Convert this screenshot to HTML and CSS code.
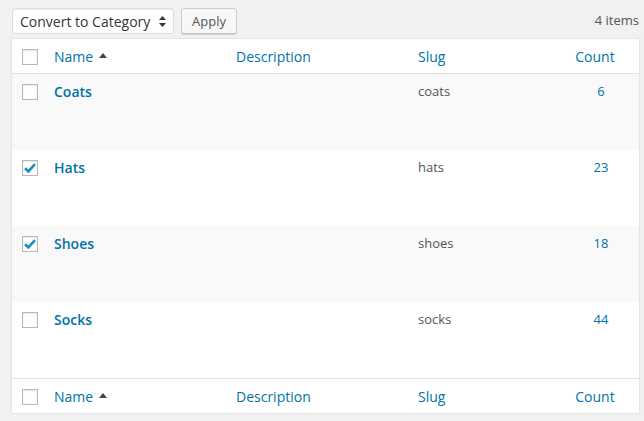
FILE: index.html
```html
<!DOCTYPE html>
<html>
<head>
<meta charset="utf-8">
<link rel="stylesheet" href="styles.css">
</head>
<body>
<div class="wrap">
  <div class="tablenav">
    <div class="actions">
      <div class="select">
        <span>Convert to Category</span>
        <svg class="updown" width="7" height="11" viewBox="0 0 7 11"><path d="M3.5 0 L7 4 L0 4 Z M0 7 L7 7 L3.5 11 Z" fill="#32373c"/></svg>
      </div>
      <button class="button">Apply</button>
    </div>
    <div class="count-items">4 items</div>
  </div>
  <table class="list">
    <colgroup>
      <col class="c-check"><col class="c-name"><col class="c-desc"><col class="c-slug"><col class="c-posts">
    </colgroup>
    <thead>
      <tr>
        <td class="check"><span class="cb"></span></td>
        <th class="head">Name<span class="sort"></span></th>
        <th class="head">Description</th>
        <th class="head">Slug</th>
        <th class="head posts">Count</th>
      </tr>
    </thead>
    <tbody>
      <tr class="alt">
        <td class="check"><span class="cb"></span></td>
        <td class="name">Coats</td><td></td><td class="slug">coats</td><td class="num">6</td>
      </tr>
      <tr>
        <td class="check"><span class="cb on"><svg width="14" height="14" viewBox="0 0 14 14"><path d="M2 7.2 L5.4 10.3 L12 3.2" fill="none" stroke="#1e8cbe" stroke-width="2.6"/></svg></span></td>
        <td class="name">Hats</td><td></td><td class="slug">hats</td><td class="num">23</td>
      </tr>
      <tr class="alt">
        <td class="check"><span class="cb on"><svg width="14" height="14" viewBox="0 0 14 14"><path d="M2 7.2 L5.4 10.3 L12 3.2" fill="none" stroke="#1e8cbe" stroke-width="2.6"/></svg></span></td>
        <td class="name">Shoes</td><td></td><td class="slug">shoes</td><td class="num">18</td>
      </tr>
      <tr>
        <td class="check"><span class="cb"></span></td>
        <td class="name">Socks</td><td></td><td class="slug">socks</td><td class="num">44</td>
      </tr>
    </tbody>
    <tfoot>
      <tr>
        <td class="check"><span class="cb"></span></td>
        <th class="head">Name<span class="sort"></span></th>
        <th class="head">Description</th>
        <th class="head">Slug</th>
        <th class="head posts">Count</th>
      </tr>
    </tfoot>
  </table>
</div>
</body>
</html>
```
FILE: styles.css
```css
html, body { margin: 0; padding: 0; background: #f1f1f1; }
body { font-family: "Open Sans", "Noto Sans", sans-serif; color: #444; font-size: 13px; }
.wrap { padding: 8px 5px 0 11px; }
.tablenav { display: flex; justify-content: space-between; align-items: center; height: 26px; margin-bottom: 4px; }
.actions { display: flex; align-items: center; gap: 7px; padding-left: 1px; }
.select {
  box-sizing: border-box; width: 162px; height: 26px; background: #fff; border: 1px solid #ddd;
  border-radius: 3px; box-shadow: inset 0 1px 2px rgba(0,0,0,.07);
  display: flex; align-items: center; justify-content: space-between; padding: 0 7px 0 7px;
  font-size: 14px; color: #32373c;
}
.updown { display: block; }
.button {
  box-sizing: border-box; height: 26px; width: 56px; padding: 0; margin: 0;
  background: #f7f7f7; border: 1px solid #ccc; border-radius: 3px; box-shadow: 0 1px 0 #ccc;
  font-family: "Open Sans", sans-serif; font-size: 13px; color: #555;
}
.count-items { font-size: 13px; color: #555; padding-right: 0; position: relative; top: -1px; }
.list {
  width: 629px; border-collapse: separate; border-spacing: 0; table-layout: fixed;
  background: #fff; border: 1px solid #e5e5e5; box-shadow: 0 1px 1px rgba(0,0,0,.04);
}
.c-check { width: 32px; }
.c-name { width: 182px; }
.c-desc { width: 182px; }
.c-slug { width: 155px; }
.c-posts { width: 76px; }
th, td { padding: 0 10px; text-align: left; vertical-align: top; }
thead td, thead th { height: 34px; border-bottom: 1px solid #e1e1e1; vertical-align: middle; }
tfoot td, tfoot th { height: 34px; border-top: 1px solid #e1e1e1; vertical-align: middle; }
.head { font-weight: normal; font-size: 14px; color: #0073aa; white-space: nowrap; }
.head.posts { text-align: center; padding-right: 12px; padding-left: 0; }
.sort {
  display: inline-block; width: 0; height: 0; margin-left: 6px; vertical-align: 4px;
  border-left: 4px solid transparent; border-right: 4px solid transparent; border-bottom: 5px solid #444;
}
td.check { padding: 0 0 0 10px; }
.cb {
  box-sizing: border-box; display: flex; align-items: center; justify-content: center;
  width: 16px; height: 16px; border: 1px solid #b4b9be; background: #fff;
  box-shadow: inset 0 1px 2px rgba(0,0,0,.1);
}
thead .cb, tfoot .cb { margin-top: 1px; }
tbody tr { height: 76px; }
tbody td { padding-top: 8px; }
tbody td.check { padding-top: 10px; }
tr.alt td { background: #f9f9f9; }
.name { font-weight: 600; font-size: 14px; color: #0073aa; }
.slug { font-size: 13px; color: #555; }
.num { text-align: center; font-size: 13px; color: #0073aa; }
```
